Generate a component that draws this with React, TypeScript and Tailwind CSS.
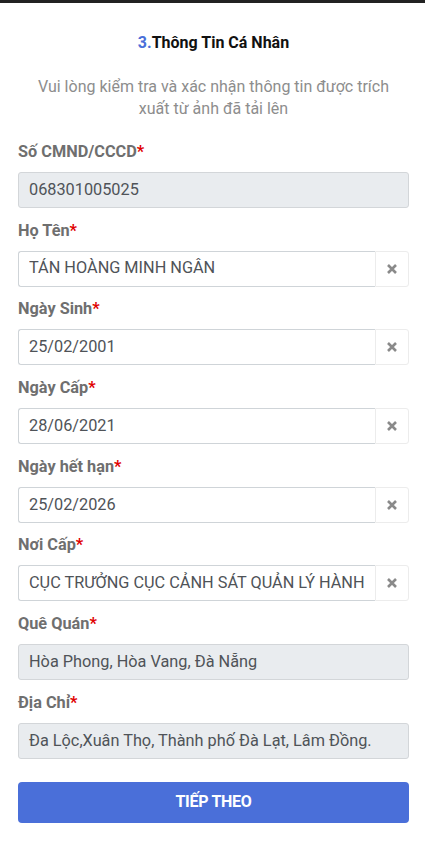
const X = () => (
  <svg width="12" height="12" viewBox="0 0 12 12">
    <path d="M2 2 L10 10 M10 2 L2 10" stroke="#8a8a8a" strokeWidth="2.6" strokeLinecap="butt" />
  </svg>
)

type FieldProps = { label: string; value: string; readOnly?: boolean }

const Field: React.FC<FieldProps> = ({ label, value, readOnly }) => {
  return (
    <div className="flex flex-col">
      <label className="text-[16.3px] leading-[20px] font-bold text-[#6f6f6f] h-[20px] mb-[10px]">
        {label}
        <span className="text-[#e00000]">*</span>
      </label>
      {readOnly ? (
        <div className="h-[36px] flex items-center px-[10px] bg-[#e9ecef] border border-[#d3d6d9] rounded-[3px] text-[16.3px] text-[#4f5358] whitespace-nowrap overflow-hidden">
          {value}
        </div>
      ) : (
        <div className="h-[36px] flex">
          <div className="flex-1 min-w-0 flex items-center pl-[10px] pr-[8px] bg-white border border-r-0 border-[#cfd4d8] rounded-l-[3px] text-[16.3px] text-[#4f5358]">
            <div className="whitespace-nowrap overflow-hidden">{value}</div>
          </div>
          <div className="w-[34px] flex items-center justify-center bg-white border border-[#ececec] rounded-r-[3px]">
            <X />
          </div>
        </div>
      )}
    </div>
  )
}

export default function App() {
  return (
    <div className="w-[425px] h-[858px] bg-white font-['Roboto',sans-serif] border-t-[3px] border-[#222]">
      <div className="pl-[18px] pr-[16px]">
        <h1 className="mt-[30px] text-center text-[16px] leading-[20px] font-bold text-[#111]">
          <span className="text-[#4a6fd9]">3.</span>Thông Tin Cá Nhân
        </h1>
        <p className="mt-[23px] px-[10px] text-center text-[16px] leading-[22px] text-[#8d8d8d]">
          Vui lòng kiểm tra và xác nhận thông tin được trích xuất từ ảnh đã tải lên
        </p>
        <div className="mt-[22px] flex flex-col gap-[12.7px]">
          <Field label="Số CMND/CCCD" value="068301005025" readOnly />
          <Field label="Họ Tên" value="TÁN HOÀNG MINH NGÂN" />
          <Field label="Ngày Sinh" value="25/02/2001" />
          <Field label="Ngày Cấp" value="28/06/2021" />
          <Field label="Ngày hết hạn" value="25/02/2026" />
          <Field label="Nơi Cấp" value="CỤC TRƯỞNG CỤC CẢNH SÁT QUẢN LÝ HÀNH CHÍNH VỀ TRẬT TỰ XÃ HỘI" />
          <Field label="Quê Quán" value="Hòa Phong, Hòa Vang, Đà Nẵng" readOnly />
          <Field label="Địa Chỉ" value="Đa Lộc,Xuân Thọ, Thành phố Đà Lạt, Lâm Đồng." readOnly />
        </div>
        <button className="mt-[23px] w-full h-[41px] rounded-[4px] bg-[#4a6fd9] text-white text-[16px] font-bold tracking-[-0.3px]">
          TIẾP THEO
        </button>
      </div>
    </div>
  )
}
